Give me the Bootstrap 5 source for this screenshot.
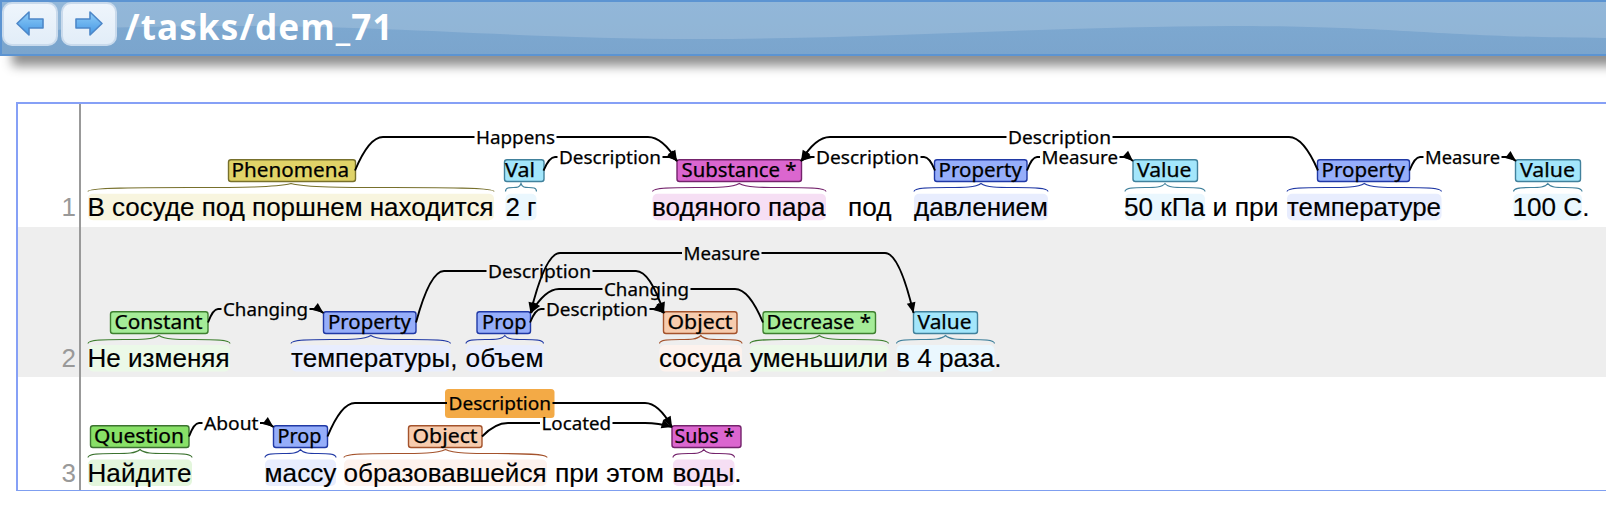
<!DOCTYPE html>
<html lang="ru">
<head>
<meta charset="utf-8">
<meta name="viewport" content="width=device-width, initial-scale=1">
<title>/tasks/dem_71</title>
<link href="https://cdn.jsdelivr.net/npm/bootstrap@5.3.0/dist/css/bootstrap.min.css" rel="stylesheet">
<style>
body{background:#fff;overflow:hidden;height:506px}
.topbar{height:56px;margin-right:-20px;border:2px solid #5c94d2;background:linear-gradient(#7eaad2,#7ba5cd);box-shadow:12px 10px 10px #909090;position:relative}
.gloss{position:absolute;inset:0;width:100%;height:52px}
.navbtns{column-gap:3px}
.navbtn{width:56px;height:44px;border:2px solid #c9daec;border-radius:10px;background:linear-gradient(#eef5fc,#e2edf8)}
.doc-title{font:bold 35px/44px "Noto Sans",sans-serif;color:#fff;letter-spacing:1.15px;margin:3px 0 0 8px}
.viewer{margin:46px -10px 0 16px;border:2px solid #86a0f6;border-bottom-width:1px;border-bottom-color:#7f9ff0}
.gutter{width:63px;border-right:2px solid #999;color:#999;flex:none;font:26px/26px "Liberation Sans",sans-serif;padding-right:3px}
.shade{background:#eee}
.canvas{display:block;flex:none}
.canvas text{font-family:"Noto Sans",sans-serif;font-size:19px;stroke:#000;stroke-width:.25px}
.canvas text.words{font-family:"Liberation Sans",sans-serif;font-size:26px;stroke-width:.15px}
.canvas text.role{font-size:18.5px}
</style>
</head>
<body>
<header class="topbar d-flex align-items-start">
  <svg class="gloss" viewBox="2 2 1622 52" preserveAspectRatio="none"><path d="M0 33C80 28 150 26 232 26C400 26 520 39 700 39S1060 26 1232 26S1440 38 1624 38V0H0Z" fill="#fff" fill-opacity=".16"/></svg>
  <div class="navbtns d-flex position-relative">
    <button class="navbtn p-0 d-flex align-items-center justify-content-center" aria-label="Previous"><svg width="30" height="28" viewBox="0 0 30 28"><defs><linearGradient id="g" x2="0" y2="1"><stop stop-color="#8fcdf8"/><stop offset="1" stop-color="#4597e4"/></linearGradient></defs><path d="M2 13.500L14 2V9H28V18H14V25Z" fill="url(#g)" stroke="#4d87c8" stroke-width="1.600" stroke-linejoin="round"/></svg></button>
    <button class="navbtn p-0 d-flex align-items-center justify-content-center" aria-label="Next"><svg width="30" height="28" viewBox="0 0 30 28"><path d="M28 13.500L16 2V9H2V18H16V25Z" fill="url(#g)" stroke="#4d87c8" stroke-width="1.600" stroke-linejoin="round"/></svg></button>
  </div>
  <div class="doc-title position-relative">/tasks/dem_71</div>
</header>
<main class="viewer" id="viewer"></main>
<script src="https://cdn.jsdelivr.net/npm/bootstrap@5.3.0/dist/js/bootstrap.bundle.min.js"></script>
<script>
const colors = {
  Phenomena:['#e0d368','#77702c','#f8f5df'], Val:['#a3e6fb','#41819c','#eaf7fe'], Substance:['#db66cf','#74236c','#f6dff4'],
  Property:['#96aefa','#2039a5','#e8edfe'], Constant:['#a5ec98','#3f8030','#ebf9e8'], Object:['#f7ccae','#a4532c','#fdf2ed'],
  Question:['#88e067','#3c7330','#e3f6dc']
};
// span: kind, label, box x1,x2, label x1,x2, text x1,x2
const rows = [
 {n:1, top:104, h:123, box:159.5, base:215.7,
  spans:[['Phenomena','Phenomena',228.5,355.5,231.5,349,88,494],['Val','Val',504.5,544,505,535,505.5,536.5],['Substance','Substance *',677,801.5,681.5,796.5,652.5,826],['Property','Property',934.5,1027,938.5,1022,914,1048],['Val','Value',1133,1197.5,1137,1191.5,1125,1205],['Property','Property',1317.5,1409.5,1321.5,1405,1287,1441.5],['Val','Value',1515.5,1580.5,1520,1575,1513.5,1582]],
  words:[['В сосуде под поршнем находится',87.5,493.5],['2 г',505.500,536.5],['водяного пара',652,825.5],['под',848,891.5],['давлением',914,1048],['50 кПа',1124,1205],['и при',1212.5,1278.5],['температуре',1287,1441],['100 С.',1512.5,1589.5]],
  arcs:[['Happens',137,355,383,476,555,648,677,'r'],['Description',157,543.5,555,559,661,669,677,'r'],['Description',137,1318,1289,1008,1111,830,801,'l'],['Description',157,935,924,816,919,811,801,'l'],['Measure',157,1027,1037,1041.5,1118,1124,1133,'r'],['Measure',157,1409.5,1420,1425,1500,1506,1516,'r']]},
 {n:2, top:227, h:150, box:311.5, base:367,
  spans:[['Constant','Constant',110.5,208,114.5,202.5,88,230],['Property','Property',323.5,416,328,411,291,450.5],['Property','Prop',477,530.5,482,526.5,466,543.5],['Object','Object',663.5,737,667.5,732.5,659.5,742],['Constant','Decrease *',763,875.5,766.5,871,750,888.5],['Val','Value',913.5,977.5,917.5,971.5,896.5,994.5]],
  words:[['Не изменяя',87.5,229.5],['температуры,',291,457.5],['объем',465.5,543.5],['сосуда',659,741.5],['уменьшили',750,888],['в 4 раза.',896,1001.5]],
  arcs:[['Changing',309,208,218,223,308,313,323.5,'r'],['Measure',253,-530.5,560,683.5,760,885,913.5,'b'],['Description',271,416,444,488,591,636,664,'r'],['Changing',289,763,735,604,689,559,531,'l'],['Description',309,530,541,546,648,654,664,'r']]},
 {n:3, top:377, h:113, box:425.5, base:481.5,
  spans:[['Question','Question',90.5,189,94,184,88,192],['Property','Prop',273.5,327.5,277.5,321.5,265,336],['Object','Object',408.5,482,412.5,477.5,344,547],['Substance','Subs *',672,741,674.5,734.5,673,734.5]],
  words:[['Найдите',87.5,191.5],['массу',264.500,336.5],['образовавшейся',343.5,546.5],['при этом',555,664],['воды.',672.5,741.5]],
  arcs:[['Description',403,327.5,355,448.5,551,645,672,'r','focus'],['About',423,189,199,204,258.5,263,273.5,'r'],['Located',423,482,508,541.5,611,645,672,'r']]}
];
const f = v => +v.toFixed(1);
const label = (t,x1,x2,y,c='') => `<text class="${c}" x="${x1}" y="${f(y)}" textLength="${f(x2-x1)}" lengthAdjust="spacingAndGlyphs">${t}</text>`;
function head(x,y,dx,dy){ const l=Math.hypot(dx,dy), a=dx/l, b=dy/l, s=10.5, w=4.4;
  return `<path d="M${x} ${y}L${f(x-a*s-b*w)} ${f(y-b*s+a*w)}L${f(x-a*s+b*w)} ${f(y-b*s-a*w)}Z"/>`; }
document.getElementById('viewer').innerHTML = rows.map(r => {
  let s='';
  for (const [k,t,a,b,ta,tb,x1,x2] of r.spans){
    const [bg,bd,hl]=colors[k], y=r.box, m=f((x1+x2)/2), w=(x2-x1)/2, y0=y+32, y1=y+28, y2=y+24;
    s+=`<rect x="${x1}" y="${r.base-22}" width="${x2-x1}" height="26.500" rx="5" fill="${hl}"/>`;
    s+=`<path d="M${x1} ${y0}C${x1} ${y1} ${x1+w*.25} ${y1} ${f(x1+w*.5)} ${y1}S${f(m-w*.08)} ${y1} ${m} ${y2}C${f(m+w*.08)} ${y1} ${f(x2-w*.75)} ${y1} ${f(x2-w*.5)} ${y1}S${x2} ${y1} ${x2} ${y0}" fill="none" stroke="${bd}" stroke-width="1.200"/>`;
    s+=`<rect x="${a}" y="${y+.25}" width="${b-a}" height="21.800" rx="2.500" fill="${bg}" stroke="${bd}" stroke-width="1.400"/>`+label(t,ta,tb,y+17.200);
  }
  for (const [t,y,st,c1,t1,t2,c2,en,d,fo] of r.arcs){
    const sy=r.box+11, ey=r.box+1.500, sx=Math.abs(st);
    if(fo) s+=`<rect x="445" y="389" width="109.500" height="29" rx="3.500" fill="#f3aa46"/>`;
    const lft = d=='l', e1 = lft? t2+1.500 : t1-1.500, e2 = lft? t1-1.500 : t2+1.500;
    const by = d=='b'? ey : sy;
    s+=`<path d="M${sx} ${by}Q${f(sx+(c1-sx)*.5)} ${y} ${c1} ${y}H${e1}M${e2} ${y}H${c2}Q${f(c2+(en-c2)*.5)} ${y} ${en} ${ey}" fill="none" stroke="#000" stroke-width="1.900"/>`;
    s+=head(en,ey,(en-c2)*.5,Math.max(ey-y,3));
    if(d=='b') s+=head(sx,ey,-(c1-sx)*.45,ey-y);
    s+=label(t,t1,t2,y+6.500,'role');
  }
  for (const [t,a,b] of r.words) s+=label(t,a,b,r.base,'words');
  const pb = r.top+r.h-r.base-4;
  return `<div class="d-flex ${r.n==2?'shade':''}"><div class="gutter d-flex align-items-end justify-content-end" style="padding-bottom:${f(pb)}px"><span>${r.n}</span></div><svg class="canvas" width="1525" height="${r.h}" viewBox="81 ${r.top} 1525 ${r.h}">${s}</svg></div>`;
}).join('');
</script>
</body>
</html>
